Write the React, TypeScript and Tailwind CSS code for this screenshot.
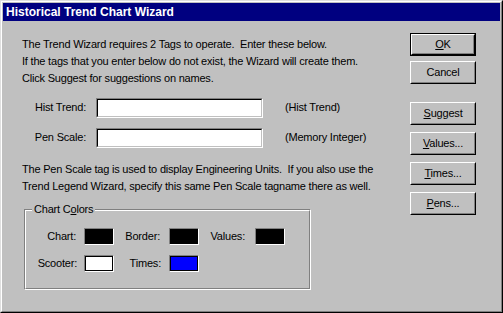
import type { ReactNode } from 'react';

const font = { fontFamily: '"Liberation Sans", Arial, sans-serif' };

function Button({ children, isDefault = false }: { children: ReactNode; isDefault?: boolean }) {
  const face = (
    <div className="flex-1 flex border-t border-l border-white border-r-black border-b-black border-r border-b">
      <div className="flex-1 flex items-center justify-center border-r border-b border-[#808080] border-t-[#c0c0c0] border-l-[#c0c0c0] border-t border-l">
        {children}
      </div>
    </div>
  );
  if (isDefault) {
    return <div className="w-[66px] h-[23px] flex border border-black">{face}</div>;
  }
  return <div className="w-[66px] h-[23px] flex">{face}</div>;
}

function Field() {
  return (
    <div className="w-[167px] h-[20px] flex border-t border-l border-[#808080] border-r-white border-b-white border-r border-b">
      <div className="flex-1 bg-white border-t border-l border-black border-r-[#c0c0c0] border-b-[#c0c0c0] border-r border-b" />
    </div>
  );
}

function Swatch({ color }: { color: string }) {
  return (
    <div className="w-[30px] h-[17px] flex border-t border-l border-[#808080] border-r-white border-b-white border-r border-b">
      <div className="flex-1 border border-black" style={{ backgroundColor: color }} />
    </div>
  );
}

export default function App() {
  return (
    <div
      className="w-[503px] h-[313px] bg-[#c0c0c0] text-black text-[11px] tracking-[-0.2px] border border-t-[#dfdfdf] border-l-[#dfdfdf] border-r-black border-b-black"
      style={font}
    >
      <div className="w-full h-full border border-t-white border-l-white border-r-[#808080] border-b-[#808080] p-px flex flex-col">
        {/* Title bar */}
        <div className="h-[18px] bg-[#000080] text-white font-bold text-[12px] tracking-normal flex items-center pl-[3px] leading-none">
          Historical Trend Chart Wizard
        </div>

        <div className="flex flex-1">
          {/* Left column */}
          <div className="w-[407px] pl-[19px] pt-[15px]">
            <div className="leading-[17px] whitespace-pre">
              <div>The Trend Wizard requires 2 Tags to operate.  Enter these below.</div>
              <div>If the tags that you enter below do not exist, the Wizard will create them.</div>
              <div>Click Suggest for suggestions on names.</div>
            </div>

            <div className="mt-[11px] flex flex-col gap-[10px]">
              <div className="flex items-center h-[20px]">
                <span className="w-[64px] text-right pb-[2px]">Hist Trend:</span>
                <div className="ml-[10px]">
                  <Field />
                </div>
                <span className="ml-[22px] pb-[2px]">(Hist Trend)</span>
              </div>
              <div className="flex items-center h-[20px]">
                <span className="w-[64px] text-right pb-[2px]">Pen Scale:</span>
                <div className="ml-[10px]">
                  <Field />
                </div>
                <span className="ml-[22px] pb-[2px]">(Memory Integer)</span>
              </div>
            </div>

            <div className="mt-[13px] leading-[17px] whitespace-pre">
              <div>The Pen Scale tag is used to display Engineering Units.  If you also use the</div>
              <div>Trend Legend Wizard, specify this same Pen Scale tagname there as well.</div>
            </div>

            {/* Chart Colors group */}
            <div className="relative mt-[14px] ml-[2px] w-[287px] h-[81px] border-t border-l border-[#808080] border-r-white border-b-white border-r border-b">
              <div className="w-full h-full border-t border-l border-white border-r-[#808080] border-b-[#808080] border-r border-b">
                <div className="pt-[17px] grid grid-cols-[58px_30px_55px_30px_56px_30px] gap-y-[10px] items-center">
                  <span className="text-right pr-[8px]">Chart:</span>
                  <Swatch color="#000000" />
                  <span className="text-right pr-[9px]">Border:</span>
                  <Swatch color="#000000" />
                  <span className="text-right pr-[10px]">Values:</span>
                  <Swatch color="#000000" />
                  <span className="text-right pr-[7px]">Scooter:</span>
                  <Swatch color="#ffffff" />
                  <span className="text-right pr-[8px]">Times:</span>
                  <Swatch color="#0000ff" />
                </div>
              </div>
              <span className="absolute left-[7px] top-[-8px] px-[2px] bg-[#c0c0c0] leading-[14px]">
                Chart C<u>o</u>lors
              </span>
            </div>
          </div>

          {/* Right column: buttons */}
          <div className="pt-[12px] flex flex-col">
            <Button isDefault>
              <span>
                <u>O</u>K
              </span>
            </Button>
            <div className="mt-[5px]">
              <Button>Cancel</Button>
            </div>
            <div className="mt-[18px] flex flex-col gap-[7px]">
              <Button>
                <span>
                  <u>S</u>uggest
                </span>
              </Button>
              <Button>
                <span>
                  <u>V</u>alues...
                </span>
              </Button>
              <Button>
                <span>
                  <u>T</u>imes...
                </span>
              </Button>
              <Button>
                <span>
                  <u>P</u>ens...
                </span>
              </Button>
            </div>
          </div>
        </div>
      </div>
    </div>
  );
}
